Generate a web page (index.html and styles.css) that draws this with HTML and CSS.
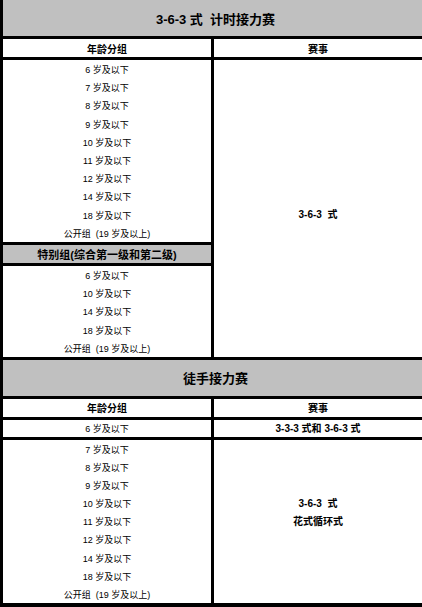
FILE: index.html
```html
<!DOCTYPE html>
<html lang="zh-CN">
<head>
<meta charset="utf-8">
<title>接力赛</title>
<link rel="stylesheet" href="styles.css">
</head>
<body>
<div class="sheet">
  <div class="title">3-6-3 式&nbsp; 计时接力赛</div>
  <div class="grid head">
    <div class="cell left">年龄分组</div>
    <div class="cell right">赛事</div>
  </div>
  <div class="grid section">
    <div class="cell left col">
      <div class="row r1">6 岁及以下</div>
      <div class="row r1">7 岁及以下</div>
      <div class="row r1">8 岁及以下</div>
      <div class="row r1">9 岁及以下</div>
      <div class="row r1">10 岁及以下</div>
      <div class="row r1">11 岁及以下</div>
      <div class="row r1">12 岁及以下</div>
      <div class="row r1">14 岁及以下</div>
      <div class="row r1">18 岁及以下</div>
      <div class="row r1">公开组&nbsp; (19 岁及以上)</div>
      <div class="subhead">特别组(综合第一级和第二级)</div>
      <div class="row r1">6 岁及以下</div>
      <div class="row r1">10 岁及以下</div>
      <div class="row r1">14 岁及以下</div>
      <div class="row r1">18 岁及以下</div>
      <div class="row r1">公开组&nbsp; (19 岁及以上)</div>
    </div>
    <div class="cell right event ev1">3-6-3&nbsp; 式</div>
  </div>
  <div class="title">徒手接力赛</div>
  <div class="grid head">
    <div class="cell left">年龄分组</div>
    <div class="cell right">赛事</div>
  </div>
  <div class="grid single">
    <div class="cell left row r0">6 岁及以下</div>
    <div class="cell right event">3-3-3 式和 3-6-3 式</div>
  </div>
  <div class="grid section last">
    <div class="cell left col">
      <div class="row r2">7 岁及以下</div>
      <div class="row r2">8 岁及以下</div>
      <div class="row r2">9 岁及以下</div>
      <div class="row r2">10 岁及以下</div>
      <div class="row r2">11 岁及以下</div>
      <div class="row r2">12 岁及以下</div>
      <div class="row r2">14 岁及以下</div>
      <div class="row r2">18 岁及以下</div>
      <div class="row r2">公开组&nbsp; (19 岁及以上)</div>
    </div>
    <div class="cell right event ev2">
      <div>3-6-3&nbsp; 式</div>
      <div>花式循环式</div>
    </div>
  </div>
</div>
</body>
</html>
```
FILE: styles.css
```css
* { box-sizing: border-box; }
html, body { margin: 0; padding: 0; background: #fff; }
body {
  font-family: "Liberation Sans", "Noto Sans CJK SC", sans-serif;
  color: #000;
  width: 422px;
  height: 607px;
  overflow: hidden;
}
.sheet {
  width: 422px;
  border-left: 3px solid #000;
}
.title {
  height: 39px;
  background: #c0c0c0;
  border-bottom: 3px solid #000;
  display: flex;
  align-items: center;
  justify-content: center;
  font-weight: bold;
  font-size: 13px;
  padding-left: 6px;
}
.grid {
  display: grid;
  grid-template-columns: 208px 211px;
}
.cell.right { border-left: 3px solid #000; }
.head {
  height: 21px;
  border-bottom: 3px solid #000;
}
.head .cell {
  display: flex;
  align-items: center;
  justify-content: center;
  font-weight: bold;
  font-size: 10px;
}
.section { border-bottom: 3px solid #000; }
.section.last { border-bottom-width: 4px; }
.col { display: flex; flex-direction: column; }
.row {
  display: flex;
  align-items: center;
  justify-content: center;
  font-size: 9px;
  padding-top: 1px;
}
.r0 { height: 17px; }
.r1 { height: 18.2px; }
.r2 { height: 18.11px; }
.subhead {
  height: 24px;
  background: #c0c0c0;
  border-top: 3px solid #000;
  border-bottom: 3px solid #000;
  display: flex;
  align-items: center;
  justify-content: center;
  font-weight: bold;
  font-size: 11px;
}
.single {
  height: 20px;
  border-bottom: 3px solid #000;
}
.event {
  display: flex;
  flex-direction: column;
  align-items: center;
  justify-content: center;
  font-weight: bold;
  font-size: 10px;
  line-height: 18px;
}
.ev1 { padding-top: 13px; }
.ev2 { padding-bottom: 17px; }
```
